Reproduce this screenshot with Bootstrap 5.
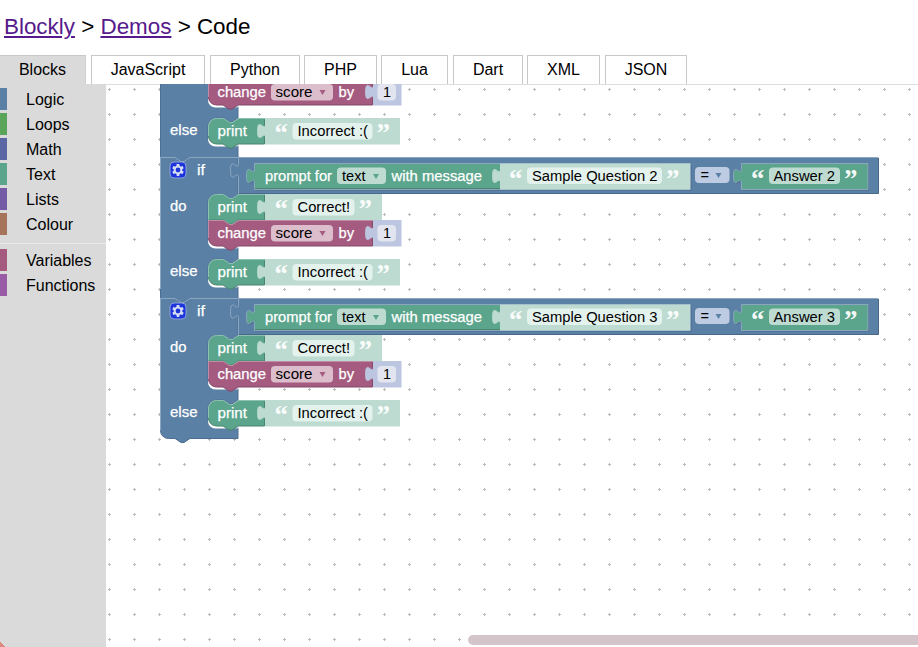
<!DOCTYPE html>
<html lang="en">
<head>
<meta charset="utf-8">
<title>Blockly Demo: Code</title>
<link href="https://cdn.jsdelivr.net/npm/bootstrap@5.3.0/dist/css/bootstrap.min.css" rel="stylesheet">
<style>
  body { font-family: "Liberation Sans", Arial, sans-serif; font-size: 16px; line-height: 20px; color: #000; }
  .page-title { font-size: 22.4px; line-height: 26px; height: 55px; padding: 14px 0 0 4px; font-weight: 400; }
  .page-title a { color: #551a8b; text-decoration-thickness: 2px; text-underline-offset: 2px; }
  .code-tabs { height: 29px; }
  .code-tabs .tab { border: 1px solid #c8c8c8; border-bottom: 0; text-align: center; line-height: 27px; height: 29px; margin-left: 5px; }
  .code-tabs .tab.on { background: #dadada; border-left: 0; border-right-color: #d0d0d0; width: 86px; margin-left: 0; }
  .tab-js { width: 114px; }
  .tab-python { width: 90px; }
  .tab-php { width: 73px; }
  .tab-lua { width: 67px; }
  .tab-dart { width: 70px; }
  .tab-xml { width: 73px; }
  .tab-json { width: 82px; }
  .code-tabs .tab-php, .code-tabs .tab-lua, .code-tabs .tab-xml { margin-left: 4px; }
  .toolbox { width: 106px; background: #dadada; padding-top: 4px; }
  .toolbox .cat { height: 22px; margin-bottom: 3px; border-left: 7px solid; padding-left: 19px; line-height: 23px; white-space: nowrap; }
  .toolbox .sep { height: 1px; background: #e8e8e8; margin: 5px 0 5px; }
  .cat-logic { border-color: #5b80a5 !important; }
  .cat-loops { border-color: #5ba55b !important; }
  .cat-math { border-color: #5b67a5 !important; }
  .cat-text { border-color: #5ba58c !important; }
  .cat-lists { border-color: #745ba5 !important; }
  .cat-colour { border-color: #a5745b !important; }
  .cat-variables { border-color: #a55b80 !important; }
  .cat-functions { border-color: #995ba5 !important; }
  .corner { width: 5px; height: 5px; background: linear-gradient(45deg, #dc8a80 55%, transparent 56%); }
  svg text { font-family: "Liberation Sans", Arial, sans-serif; font-size: 14.67px; fill: #fff; stroke: #fff; stroke-width: .25px; }
  svg text.ink { fill: #000; stroke: none; }
  svg text.quote { font-family: "Liberation Serif", serif; font-weight: 700; font-size: 27px; stroke: none; fill-opacity: .95; }
</style>
<script src="https://cdn.jsdelivr.net/npm/bootstrap@5.3.0/dist/js/bootstrap.bundle.min.js"></script>
</head>
<body class="vh-100 overflow-hidden d-flex flex-column bg-white">
<h1 class="page-title m-0 flex-shrink-0"><a href="#">Blockly</a> &gt; <a href="#">Demos</a> &gt; Code</h1>
<nav class="code-tabs d-flex flex-shrink-0">
  <div class="tab on">Blocks</div>
  <div class="tab tab-js">JavaScript</div>
  <div class="tab tab-python">Python</div>
  <div class="tab tab-php">PHP</div>
  <div class="tab tab-lua">Lua</div>
  <div class="tab tab-dart">Dart</div>
  <div class="tab tab-xml">XML</div>
  <div class="tab tab-json">JSON</div>
</nav>
<main class="d-flex flex-grow-1 overflow-hidden">
  <aside class="toolbox flex-shrink-0 d-flex flex-column">
    <div class="cat cat-logic">Logic</div>
    <div class="cat cat-loops">Loops</div>
    <div class="cat cat-math">Math</div>
    <div class="cat cat-text">Text</div>
    <div class="cat cat-lists">Lists</div>
    <div class="cat cat-colour">Colour</div>
    <div class="sep"></div>
    <div class="cat cat-variables">Variables</div>
    <div class="cat cat-functions">Functions</div>
    <div class="corner mt-auto"></div>
  </aside>
  <svg id="workspace" class="d-block flex-shrink-0" width="812" height="563" viewBox="106 84 812 563">
    <defs>
      <pattern id="grid" x="97" y="77" width="25" height="25" patternUnits="userSpaceOnUse">
        <path d="M11 12.5h3M12.5 11v3" stroke="#bcbcbc" stroke-width="1"/>
      </pattern>
    </defs>
    <rect x="106" y="84" width="812" height="563" fill="#fff"/>
    <rect x="106" y="84" width="812" height="563" fill="url(#grid)"/>
    <path d="M106 84.5H918" stroke="#ddd"/>
    <g id="blocks"></g>
    <rect x="468" y="635" width="470" height="10" rx="5" fill="#d3c5c9"/>
  </svg>
</main>
<script>
  const BLUE = '#5b80a5', GREEN = '#5ba58c', PINK = '#a55b80', MINT = '#bddbd1', LILAC = '#bdc6e0';
  const label = (x, y, w, s, c = '') => `<text x="${x}" y="${y}" textLength="${w}" lengthAdjust="spacingAndGlyphs" class="${c}">${s}</text>`;
  const field = (x, y, w, fill, h = 16.5) => `<rect x="${x}" y="${y}" width="${w}" height="${h}" rx="4" fill="${fill}"/>`;
  const arrow = (x, y, fill) => `<path d="M${x - 3} ${y - 2.5}h6l-3 5z" fill="${fill}"/>`;
  const quote = (x, y, s) => `<text class="quote" x="${x}" y="${y}">${s}</text>`;
  const shape = (d, fill, light, dark) => `<path d="${d}" transform="translate(1 1)" fill="${dark}"/><path d="${d}" fill="${fill}"/><path d="${d}" fill="none" stroke="${light}" stroke-width="1"/>`;
  // Left edge with a puzzle tab, drawn upward from the end of the tab.
  const tabUp = 'c0 -10 -8 8 -8 -7.5s8 2.5 8 -7.5';

  // Statement block: notch on top, bump below, rounded left corners.
  function statement(y, right, fill, light, dark, roundTop, roundBottom) {
    const b = y + 25.5;
    const top = roundTop ? `M208.5 ${y + 8}a8 8 0 0 1 8 -8` : `M208.5 ${y}h8`;
    const bottom = roundBottom ? `H216.5a8 8 0 0 1 -8 -8` : `H208.5`;
    const body = `${top}h7l6 4h3l6 -4H${right}V${b}H238l-6 4h-3l-6 -4${bottom}z`;
    return `<path d="${body}" fill="${fill}"/><path d="M208.5 ${b - (roundBottom ? 8 : 0)}V${y + (roundTop ? 8 : 0)}${roundTop ? 'a8 8 0 0 1 8 -8' : 'h8'}h7l6 4h3l6 -4H${right}" fill="none" stroke="${light}"/>
      <path d="M${right - .5} ${y + 1}V${b}H238l-6 4h-3l-6 -4${bottom}" fill="none" stroke="${dark}"/>`;
  }
  const socket = (x, y, fill) => `<path d="M${x} ${y + 5}c0 10 -8 -8 -8 7.5s8 -2.5 8 7.5z" fill="${fill}" stroke="${fill}" stroke-width=".8"/>`;

  function printRow(y, text, textWidth, right, roundBottom) {
    const fw = textWidth + 9.5;
    return statement(y, 265, GREEN, '#8cc0af', '#49846f', true, roundBottom)
      + `<rect x="265" y="${y - .5}" width="${right - 265}" height="26.5" fill="${MINT}"/>` + socket(265.5, y, MINT)
      + label(217.5, y + 17.5, 29.5, 'print')
      + quote(274.5, y + 23.5, '“') + field(292.5, y + 4.5, fw, '#e4f2ed') + label(297.5, y + 17.5, textWidth, text, 'ink')
      + quote(292.5 + fw + 4, y + 23.5, '”');
  }
  function changeRow(y) {
    return statement(y, 373, PINK, '#c08ca6', '#84496a', false, true)
      + `<rect x="373" y="${y - .5}" width="28.5" height="26.5" fill="${LILAC}"/>` + socket(373.5, y, LILAC)
      + label(217.5, y + 17.5, 48.5, 'change') + field(271, y + 4.5, 62, '#dbbdcc') + label(275.5, y + 17.5, 37, 'score', 'ink')
      + arrow(322.5, y + 13, PINK) + label(338.5, y + 17.5, 15.5, 'by') + field(377.5, y + 4.5, 18.5, '#e2e5f0') + label(383, y + 17.5, 8, '1', 'ink');
  }
  function gear(x, y) {
    let teeth = '';
    for (let a = 0; a < 360; a += 60) teeth += `<rect x="-1.4" y="-5.9" width="2.8" height="2.6" rx=".4" transform="rotate(${a})"/>`;
    return `<rect x="${x - 8}" y="${y - 8}" width="16" height="16" rx="4" fill="#1f35dc" stroke="#8ca0dc"/>
      <g transform="translate(${x} ${y})" fill="#d5def4">${teeth}<circle r="3.4" fill="none" stroke="#d5def4" stroke-width="2"/></g>`;
  }
  // White crescent under the rounded corner of a nested statement, inside the arm that holds it.
  const crescent = y => `<path d="M208 ${y - 7}v2.5a7.5 7 0 0 0 7.5 7H227l-3 -4H212z" fill="#fff"/><path d="M234 ${y + 1.8}H238" stroke="#fff"/>`;

  function ifBlock(dy, n, last) {
    const end = last ? 'V297.5H190l-6 4h-3l-6 -4h-6.5a8 8 0 0 1 -8 -8' : 'V298H160.5';
    const outline = `M160.5 157.5h14.5l6 4h3l6 -4H238V194.5l-6 4h-3l-6 -4h-7a8 8 0 0 0 -8 8V239.5a8 8 0 0 0 8 8H238V259l-6 4h-3l-6 -4h-7a8 8 0 0 0 -8 8V278.5a8 8 0 0 0 8 8H238${end}z`;
    let s = `<g transform="translate(0 ${dy})"><rect x="160" y="156" width="78.5" height="7" fill="${BLUE}"/>`;
    s += `<path d="${outline}" fill="${BLUE}" stroke="#4c6f93"/><path d="M160.5 289V157.5h14.5l6 4h3l6 -4H238" fill="none" stroke="#8ca6c0"/>`;
    s += crescent(246) + crescent(285);
    s += `<path d="M238 157.5H878.5V193.5H238v-16${tabUp}z" fill="${BLUE}"/><path d="M238.5 193V178${tabUp}v-5.5H878" fill="none" stroke="#8ca6c0"/><path d="M239 193.5H878.5V158" fill="none" stroke="#49698a"/>`;
    s += gear(178, 170) + label(197, 175, 8, 'if') + label(170, 211, 16.5, 'do') + label(170, 276, 27.5, 'else');
    s += shape(`M254.5 163.5H690.5V189.5H254.5v-6${tabUp}z`, GREEN, '#8ca6c0', '#49698a');
    s += `<path d="M255 188.5H500" stroke="#49846f"/><rect x="500" y="163.5" width="190" height="26" fill="${MINT}"/>` + socket(500.5, 163.5, MINT);
    s += label(265, 181, 67, 'prompt for') + field(337, 167.5, 49, MINT) + label(342, 181, 23.5, 'text', 'ink') + arrow(376, 176.5, GREEN) + label(391.5, 181, 90.5, 'with message');
    s += quote(509, 187.5, '“') + field(527, 167.5, 135, '#e4f2ed') + label(532, 181, 125.5, 'Sample Question ' + n, 'ink') + quote(666, 187.5, '”');
    s += field(695, 167, 34.5, '#bdcce2', 16) + label(700.5, 180, 8.5, '=', 'ink') + arrow(718.5, 175.5, BLUE);
    s += shape(`M741.5 163.5H868V189.5H741.5v-6${tabUp}z`, GREEN, '#8ca6c0', '#49698a');
    s += quote(751, 187.5, '“') + field(769, 167.5, 71, MINT) + label(773.5, 181, 61.5, 'Answer ' + n, 'ink') + quote(844, 187.5, '”');
    s += printRow(194.5, 'Correct!', 52.5, 382, false) + changeRow(220.5) + printRow(259.5, 'Incorrect :(', 70.5, 400, true);
    return s + '</g>';
  }
  // Bottom part of the first conditional, whose header is scrolled out of view.
  function scrolledIf() {
    return `<path d="M160.5 80H208.5V98.5a8 8 0 0 0 8 8H238V118l-6 4h-3l-6 -4h-7a8 8 0 0 0 -8 8V137.5a8 8 0 0 0 8 8H238V157H160.5z" fill="${BLUE}" stroke="#4c6f93"/>`
      + crescent(105) + crescent(144)
      + label(170, 135, 27.5, 'else') + changeRow(79.5) + printRow(118.5, 'Incorrect :(', 70.5, 400, true);
  }
  document.getElementById('blocks').innerHTML = scrolledIf() + ifBlock(0, 2, false) + ifBlock(141, 3, true);
</script>
</body>
</html>
